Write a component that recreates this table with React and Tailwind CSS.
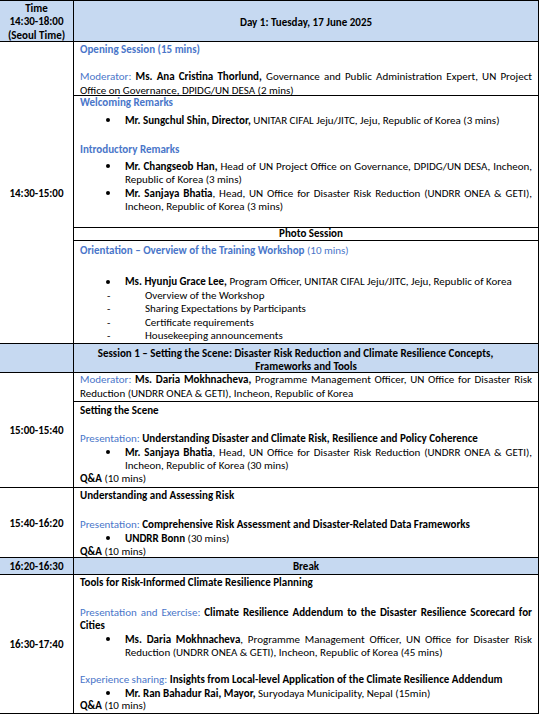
function Blue({ children, bold }) {
  return <span className={bold ? 'text-[#4a76c9] font-bold' : 'text-[#4a76c9]'}>{children}</span>;
}

function B({ children }) {
  return <span className="font-bold">{children}</span>;
}

// a full, justified line (forced break after it)
function J({ children }) {
  return <div className="text-justify [text-align-last:justify] [word-spacing:-1.5px]">{children}</div>;
}

function Bullet({ children, className = '' }) {
  return (
    <div className={`flex pl-[26px] ${className}`}>
      <div className="w-[19px] shrink-0 h-[13.5px] flex items-center">
        <span className="block w-[4px] h-[4px] rounded-full bg-black" />
      </div>
      <div className="flex-1 min-w-0">{children}</div>
    </div>
  );
}

function Dash({ children }) {
  return (
    <div className="flex pl-[27px]">
      <span className="w-[38px] shrink-0">-</span>
      <span>{children}</span>
    </div>
  );
}

function Blank({ h = 'h-[13.5px]' }) {
  return <div className={h} />;
}

function TimeCell({ label }) {
  return (
    <div className="w-[74px] shrink-0 border-r border-black flex items-center justify-center font-bold pt-[2px]">
      {label}
    </div>
  );
}

export default function App() {
  return (
    <div className="w-[539px] bg-white text-black font-['Carlito','Lato',sans-serif] text-[11px] leading-[13.5px]">
      <div className="border-r border-black">
        {/* header */}
        <div className="flex h-[42px] border-y border-black bg-[#c6d9f1]">
          <div className="w-[74px] shrink-0 border-r border-black flex flex-col items-center justify-center font-bold text-center pt-[2px]">
            <div>Time</div>
            <div>14:30-18:00</div>
            <div>(Seoul Time)</div>
          </div>
          <div className="flex-1 flex items-center justify-center font-bold pt-[3px]">Day 1: Tuesday, 17 June 2025</div>
        </div>

        {/* opening block */}
        <div className="flex border-b border-black">
          <TimeCell label="14:30-15:00" />
          <div className="flex-1 flex flex-col">
            <div className="h-[54px] border-b border-black pl-[6px] pr-[6px] pt-[1px]">
              <div><Blue bold>Opening Session (15 mins)</Blue></div>
              <Blank />
              <J>
                <Blue>Moderator:</Blue> <B>Ms. Ana Cristina Thorlund,</B> Governance and Public Administration Expert, UN Project
              </J>
              <div>Office on Governance, DPIDG/UN DESA (2 mins)</div>
            </div>
            <div className="h-[132px] border-b border-black pl-[6px] pr-[6px]">
              <div><Blue bold>Welcoming Remarks</Blue></div>
              <Bullet className="mt-[4px]">
                <B>Mr. Sungchul Shin, Director,</B> UNITAR CIFAL Jeju/JITC, Jeju, Republic of Korea (3 mins)
              </Bullet>
              <Blank h="h-[15.5px]" />
              <div><Blue bold>Introductory Remarks</Blue></div>
              <Bullet className="mt-[3.5px]">
                <J><B>Mr. Changseob Han,</B> Head of UN Project Office on Governance, DPIDG/UN DESA, Incheon,</J>
                <div>Republic of Korea (3 mins)</div>
              </Bullet>
              <Bullet>
                <J><B>Mr. Sanjaya Bhatia</B>, Head, UN Office for Disaster Risk Reduction (UNDRR ONEA &amp; GETI),</J>
                <div>Incheon, Republic of Korea (3 mins)</div>
              </Bullet>
            </div>
            <div className="h-[13px] border-b border-black flex items-center justify-center pl-[10px] font-bold leading-[12px]">
              Photo Session
            </div>
            <div className="h-[102px] pl-[6px] pr-[6px] pt-[3px]">
              <div><Blue bold>Orientation – Overview of the Training Workshop</Blue> <Blue>(10 mins)</Blue></div>
              <Blank />
              <Bullet className="mt-[4px]">
                <B>Ms. Hyunju Grace Lee,</B> Program Officer, UNITAR CIFAL Jeju/JITC, Jeju, Republic of Korea
              </Bullet>
              <Dash>Overview of the Workshop</Dash>
              <Dash>Sharing Expectations by Participants</Dash>
              <Dash>Certificate requirements</Dash>
              <Dash>Housekeeping announcements</Dash>
            </div>
          </div>
        </div>

        {/* session 1 header */}
        <div className="flex h-[29px] border-b border-black bg-[#c6d9f1]">
          <div className="w-[74px] shrink-0 border-r border-black" />
          <div className="flex-1 flex flex-col justify-center items-center font-bold text-center pt-[4px]">
            <div className="pr-[21px] whitespace-nowrap">Session 1 – Setting the Scene: Disaster Risk Reduction and Climate Resilience Concepts,</div>
            <div>Frameworks and Tools</div>
          </div>
        </div>

        {/* 15:00-15:40 */}
        <div className="flex border-b border-black">
          <TimeCell label="15:00-15:40" />
          <div className="flex-1 flex flex-col">
            <div className="h-[29px] border-b border-black pl-[6px] pr-[6px]">
              <J>
                <Blue>Moderator:</Blue> <B>Ms. Daria Mokhnacheva,</B> Programme Management Officer, UN Office for Disaster Risk
              </J>
              <div>Reduction (UNDRR ONEA &amp; GETI), Incheon, Republic of Korea</div>
            </div>
            <div className="h-[85px] pl-[6px] pr-[6px] pt-[2px]">
              <div><B>Setting the Scene</B></div>
              <Blank h="h-[14.5px]" />
              <div><Blue>Presentation:</Blue> <B>Understanding Disaster and Climate Risk, Resilience and Policy Coherence</B></div>
              <Bullet>
                <J><B>Mr. Sanjaya Bhatia</B>, Head, UN Office for Disaster Risk Reduction (UNDRR ONEA &amp; GETI),</J>
                <div>Incheon, Republic of Korea (30 mins)</div>
              </Bullet>
              <div className="-mt-[1px]"><B>Q&amp;A</B> (10 mins)</div>
            </div>
          </div>
        </div>

        {/* 15:40-16:20 */}
        <div className="flex h-[70px] border-b border-black">
          <TimeCell label="15:40-16:20" />
          <div className="flex-1 pl-[6px] pr-[6px] pt-[1px]">
            <div><B>Understanding and Assessing Risk</B></div>
            <Blank h="h-[15.5px]" />
            <div><Blue>Presentation:</Blue> <B>Comprehensive Risk Assessment and Disaster-Related Data Frameworks</B></div>
            <Bullet>
              <B>UNDRR Bonn</B> (30 mins)
            </Bullet>
            <div><B>Q&amp;A</B> (10 mins)</div>
          </div>
        </div>

        {/* break */}
        <div className="flex h-[17px] border-b border-black bg-[#c6d9f1] font-bold">
          <TimeCell label="16:20-16:30" />
          <div className="flex-1 flex items-center justify-center pt-[2px]">Break</div>
        </div>

        {/* 16:30-17:40 */}
        <div className="flex h-[139px] border-b border-black">
          <TimeCell label="16:30-17:40" />
          <div className="flex-1 pl-[6px] pr-[6px] pt-[0.5px]">
            <div><B>Tools for Risk-Informed Climate Resilience Planning</B></div>
            <Blank h="h-[16.5px]" />
            <J>
              <Blue>Presentation and Exercise:</Blue> <B>Climate Resilience Addendum to the Disaster Resilience Scorecard for</B>
            </J>
            <div><B>Cities</B></div>
            <Bullet>
              <J><B>Ms. Daria Mokhnacheva</B>, Programme Management Officer, UN Office for Disaster Risk</J>
              <div>Reduction (UNDRR ONEA &amp; GETI), Incheon, Republic of Korea (45 mins)</div>
            </Bullet>
            <Blank />
            <div><Blue>Experience sharing:</Blue> <B>Insights from Local-level Application of the Climate Resilience Addendum</B></div>
            <Bullet>
              <B>Mr. Ran Bahadur Rai, Mayor,</B> Suryodaya Municipality, Nepal (15min)
            </Bullet>
            <div className="-mt-[1px]"><B>Q&amp;A</B> (10 mins)</div>
          </div>
        </div>
      </div>
    </div>
  );
}
